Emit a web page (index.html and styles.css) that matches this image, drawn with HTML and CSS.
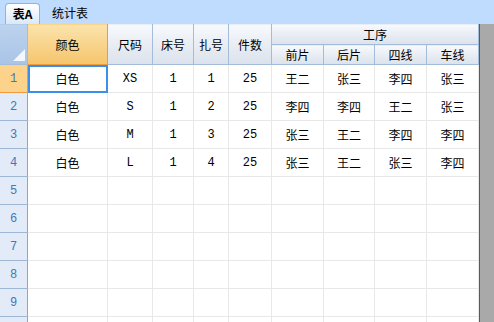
FILE: index.html
```html
<!DOCTYPE html>
<html lang="zh">
  <head>
    <meta charset="UTF-8" />
    <title>表A</title>
    <link rel="stylesheet" href="styles.css">
  </head>
  <body>
    <div class="tabs">
      <div class="tab active">表A</div>
      <div class="tab">统计表</div>
    </div>

    <div class="sheet">
      <table class="grid">
        <colgroup>
          <col class="c-head" />
          <col class="c-color" />
          <col class="c-size" />
          <col class="c-bed" />
          <col class="c-bundle" />
          <col class="c-count" />
          <col class="c-step" />
          <col class="c-step2" />
          <col class="c-step" />
          <col class="c-step" />
        </colgroup>
        <thead>
          <tr class="h1">
            <th rowspan="2" class="corner"><span class="tri"></span></th>
            <th rowspan="2" class="sel">颜色</th>
            <th rowspan="2">尺码</th>
            <th rowspan="2">床号</th>
            <th rowspan="2">扎号</th>
            <th rowspan="2">件数</th>
            <th colspan="4">工序</th>
          </tr>
          <tr class="h2">
            <th>前片</th>
            <th>后片</th>
            <th>四线</th>
            <th>车线</th>
          </tr>
        </thead>
        <tbody>
          <tr>
            <th class="sel">1</th>
            <td class="cur">白色</td><td class="lat">XS</td><td class="lat">1</td><td class="lat">1</td><td class="lat">25</td>
            <td>王二</td><td>张三</td><td>李四</td><td>张三</td>
          </tr>
          <tr>
            <th>2</th>
            <td>白色</td><td class="lat">S</td><td class="lat">1</td><td class="lat">2</td><td class="lat">25</td>
            <td>李四</td><td>李四</td><td>王二</td><td>张三</td>
          </tr>
          <tr>
            <th>3</th>
            <td>白色</td><td class="lat">M</td><td class="lat">1</td><td class="lat">3</td><td class="lat">25</td>
            <td>张三</td><td>王二</td><td>李四</td><td>李四</td>
          </tr>
          <tr>
            <th>4</th>
            <td>白色</td><td class="lat">L</td><td class="lat">1</td><td class="lat">4</td><td class="lat">25</td>
            <td>张三</td><td>王二</td><td>张三</td><td>李四</td>
          </tr>
          <tr><th>5</th><td></td><td></td><td></td><td></td><td></td><td></td><td></td><td></td><td></td></tr>
          <tr><th>6</th><td></td><td></td><td></td><td></td><td></td><td></td><td></td><td></td><td></td></tr>
          <tr><th>7</th><td></td><td></td><td></td><td></td><td></td><td></td><td></td><td></td><td></td></tr>
          <tr><th>8</th><td></td><td></td><td></td><td></td><td></td><td></td><td></td><td></td><td></td></tr>
          <tr><th>9</th><td></td><td></td><td></td><td></td><td></td><td></td><td></td><td></td><td></td></tr>
          <tr><th></th><td></td><td></td><td></td><td></td><td></td><td></td><td></td><td></td><td></td></tr>
        </tbody>
      </table>
      <div class="scrollbar"></div>
    </div>
  </body>
</html>
```

FILE: styles.css
```css
* {
  margin: 0;
  padding: 0;
  box-sizing: border-box;
}

body {
  width: 494px;
  height: 322px;
  overflow: hidden;
  background: #ffffff;
  font-family: "Noto Sans CJK SC", "DejaVu Sans", sans-serif;
  font-size: 12px;
  color: #000000;
}

.tabs {
  height: 24px;
  background: #bfdbfd;
  display: flex;
  align-items: flex-end;
  padding-left: 5px;
  gap: 4px;
}

.tab {
  height: 21px;
  line-height: 20px;
  padding: 0 8px;
  font-size: 12px;
}

.tab.active {
  width: 35px;
  padding: 0;
  text-align: center;
  font-weight: bold;
  border: 1px solid #8fb3e0;
  border-bottom: none;
  border-radius: 4px 4px 0 0;
  background: linear-gradient(#ffffff, #dbe8f8);
}

.sheet {
  display: flex;
  height: 298px;
  overflow: hidden;
}

.grid {
  width: 480px;
  flex: none;
  table-layout: fixed;
  border-collapse: collapse;
  margin-top: -1px;
  margin-left: -1px;
}

.c-head { width: 28px; }
.c-color { width: 80px; }
.c-size { width: 45px; }
.c-bed { width: 41px; }
.c-bundle { width: 35px; }
.c-count { width: 43px; }
.c-step { width: 52px; }
.c-step2 { width: 51px; }

th,
td {
  text-align: center;
  vertical-align: middle;
  font-weight: normal;
  white-space: nowrap;
  overflow: hidden;
}

thead th {
  height: 20px;
  border: 1px solid #a3bcd9;
  background: linear-gradient(#f7f9fc, #dbe2ec);
  font-size: 12px;
}

.h1 th {
  height: 21px;
}

thead th.sel {
  background: linear-gradient(#fbe3ad, #f5c56c);
  border: 1px solid #f09a3a;
}

thead th.corner {
  position: relative;
  background: linear-gradient(#bdd3ee, #a9c4e6);
}

.tri {
  position: absolute;
  right: 2px;
  bottom: 3px;
  width: 0;
  height: 0;
  border-left: 12px solid transparent;
  border-bottom: 12px solid #f4f7fb;
}

tbody th {
  height: 28px;
  background: #e2ebf7;
  border: 1px solid #9db6d4;
  border-right-color: #8aa6c9;
  color: #3f78bb;
  font-family: "Liberation Mono", monospace;
  font-size: 12px;
}

tbody th.sel {
  background: #fdd38c;
  border-color: #f09a3a;
}

td {
  height: 28px;
  border: 1px solid #e8e8e8;
  font-size: 12px;
}

td.lat {
  font-family: "Liberation Mono", monospace;
  font-size: 12px;
}

td.cur {
  outline: 2px solid #3c8fe9;
  outline-offset: -2px;
}

.scrollbar {
  width: 15px;
  flex: none;
  background: #a9a9a9;
  border-left: 1px solid #5a5a5a;
}
```
